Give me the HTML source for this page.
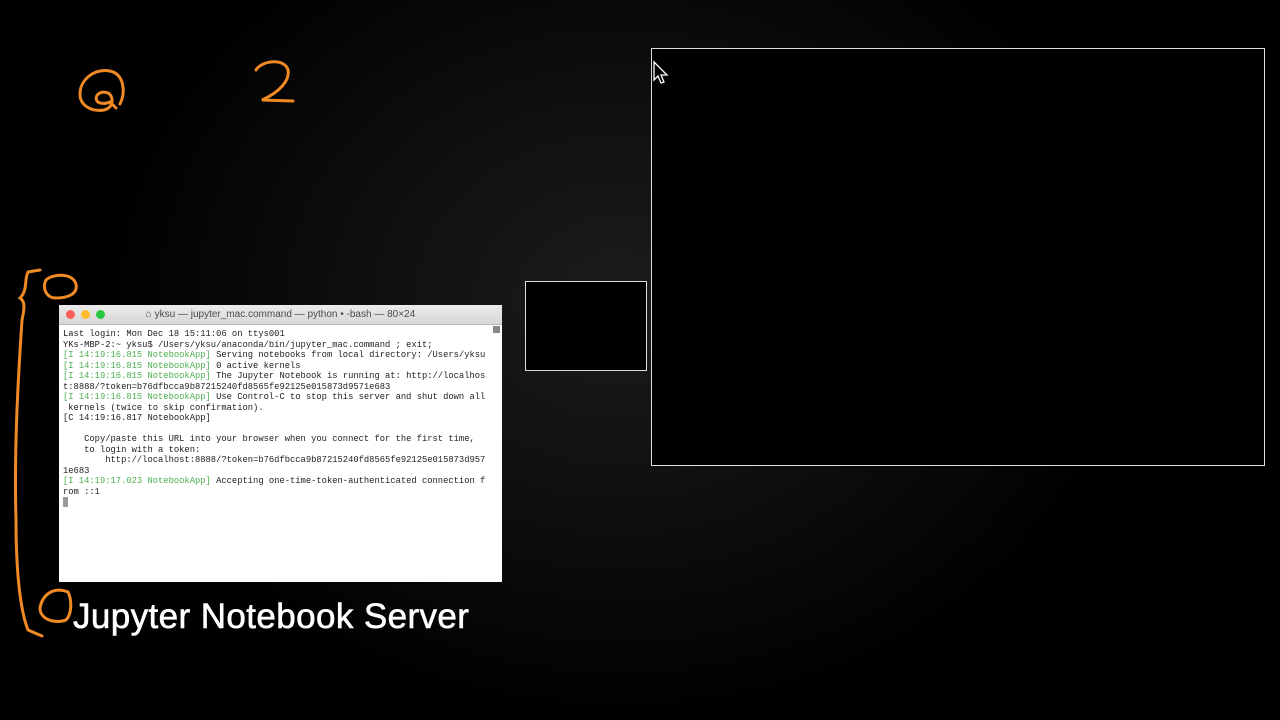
<!DOCTYPE html>
<html><head><meta charset="utf-8"><style>
html,body{margin:0;padding:0;width:1280px;height:720px;overflow:hidden;background:#000;}
body{position:relative;background:radial-gradient(ellipse 520px 420px at 620px 300px,#1c1c1c 0%,#0c0c0c 60%,#000 100%);}
.term{position:absolute;left:59px;top:305px;width:443px;height:277px;background:#fff;}
.tb{height:19px;background:linear-gradient(#ececec,#d6d6d6);border-bottom:1px solid #b8b8b8;position:relative;font:10px "Liberation Sans",sans-serif;color:#4a4a4a;text-align:center;line-height:19px;}
.dot{position:absolute;top:5px;width:9px;height:9px;border-radius:50%;}
pre{margin:0;padding:4px 0 0 4px;font:8.8px/10.5px "Liberation Mono",monospace;color:#222;}
.g{color:#4caf50;}
.scr{position:absolute;right:2px;top:21px;width:7px;height:7px;background:#888;}
.box{position:absolute;border:1px solid #ddd;background:#000;}
.title{position:absolute;left:73px;top:597px;font:35px "Liberation Sans",sans-serif;color:#fff;letter-spacing:0.4px;-webkit-text-stroke:0.6px #fff;}
</style></head><body>
<svg width="1280" height="720" style="position:absolute;left:0;top:0" fill="none" stroke="#f08a24" stroke-width="3" stroke-linecap="round">
<path d="M120 104 C126 92 124 74 110 71 C94 68 80 80 80 94 C80 106 92 112 104 110 C114 108 114 96 108 93 C100 90 94 96 97 101 C99 104 106 104 110 102 L116 108"/>
<path d="M256 70 C262 60 285 58 288 70 C290 80 280 92 262 100 L293 101"/>
<path d="M40 270 L28 272 C24 280 28 290 20 298 C26 302 24 310 22 320 C18 380 14 450 16 520 C16 570 20 610 28 630 L42 636"/>
<path d="M46 280 C52 274 72 272 76 284 C78 294 68 298 56 298 C46 298 42 288 46 280"/>
<path d="M68 592 C52 586 42 596 40 608 C40 620 56 624 66 620 C72 614 72 600 68 592"/>
</svg>
<div class="term">
<div class="tb"><span class="dot" style="left:7px;background:#fc5f57"></span><span class="dot" style="left:22px;background:#fdbc2e"></span><span class="dot" style="left:37px;background:#2ac840"></span>&#8962; yksu — jupyter_mac.command — python • -bash — 80×24</div>
<div class="scr"></div>
<pre>Last login: Mon Dec 18 15:11:06 on ttys001
YKs-MBP-2:~ yksu$ /Users/yksu/anaconda/bin/jupyter_mac.command ; exit;
<span class="g">[I 14:19:16.815 NotebookApp]</span> Serving notebooks from local directory: /Users/yksu
<span class="g">[I 14:19:16.815 NotebookApp]</span> 0 active kernels
<span class="g">[I 14:19:16.815 NotebookApp]</span> The Jupyter Notebook is running at: http://localhos
t:8888/?token=b76dfbcca9b87215240fd8565fe92125e015873d9571e683
<span class="g">[I 14:19:16.815 NotebookApp]</span> Use Control-C to stop this server and shut down all
 kernels (twice to skip confirmation).
[C 14:19:16.817 NotebookApp]

    Copy/paste this URL into your browser when you connect for the first time,
    to login with a token:
        http://localhost:8888/?token=b76dfbcca9b87215240fd8565fe92125e015873d957
1e683
<span class="g">[I 14:19:17.023 NotebookApp]</span> Accepting one-time-token-authenticated connection f
rom ::1
<span style="background:#999">&nbsp;</span></pre>
</div>
<div class="box" style="left:525px;top:281px;width:120px;height:88px;"></div>
<div class="box" style="left:651px;top:48px;width:612px;height:416px;"></div>
<svg width="20" height="26" style="position:absolute;left:652px;top:60px"><path d="M2 2 L2 20 L6 16 L9 23 L12 22 L9 15 L15 15 Z" fill="#000" stroke="#fff" stroke-width="1.3"/></svg>
<div class="title">Jupyter Notebook Server</div>
</body></html>
